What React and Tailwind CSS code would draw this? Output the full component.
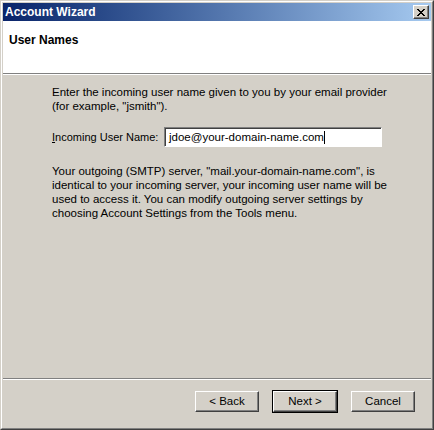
import React from "react";

function WinButton({ children, isDefault }) {
  return (
    <div className={isDefault ? "border border-black" : "border border-transparent"}>
      <button className="w-[64px] h-[21px] bg-[#d4d0c8] text-[11.5px] text-black border-t border-l border-white border-r border-b border-r-[#404040] border-b-[#404040] shadow-[inset_-1px_-1px_0_#808080] flex items-center justify-center">
        {children}
      </button>
    </div>
  );
}

export default function App() {
  return (
    <div
      className="w-[434px] h-[430px] bg-[#d4d0c8] text-black overflow-hidden"
      style={{ fontFamily: "'Liberation Sans', Arial, sans-serif" }}
    >
      <div className="w-full h-full border-t border-l border-[#d4d0c8] border-r border-b border-r-[#404040] border-b-[#404040]">
        <div className="w-full h-full border-t border-l border-white border-r border-b border-r-[#808080] border-b-[#808080] p-px flex flex-col">
          {/* title bar */}
          <div className="h-[18px] shrink-0 bg-gradient-to-r from-[#0a246a] to-[#a6caf0] flex items-center justify-between pl-[2px] pr-[2px]">
            <span className="text-white font-bold text-[12px] leading-none">Account Wizard</span>
            <div className="w-[16px] h-[14px] bg-[#d4d0c8] border-t border-l border-white border-r border-b border-r-[#404040] border-b-[#404040] shadow-[inset_-1px_-1px_0_#808080] flex items-center justify-center">
              <svg width="8" height="7" viewBox="0 0 8 7">
                <path d="M0 0h2v1h1v1h2V1h1V0h2v1H7v1H6v1H5v1h1v1h1v1h1v1H6V6H5V5H3v1H2v1H0V6h1V5h1V4h1V3H2V2H1V1H0z" fill="#000" />
              </svg>
            </div>
          </div>

          {/* header */}
          <div className="h-[52px] shrink-0 bg-white pl-[6px] pt-[10px]">
            <div className="font-bold text-[12px]">User Names</div>
          </div>
          <div className="h-px bg-[#808080] shrink-0" />
          <div className="h-px bg-white shrink-0" />

          {/* body */}
          <div className="flex-1 pl-[49px] pr-[30px] pt-[10px] text-[11.5px] leading-[14px]">
            <p>
              Enter the incoming user name given to you by your email provider
              <br />
              (for example, "jsmith").
            </p>
            <div className="flex items-center mt-[14px]">
              <span className="w-[112px] shrink-0 whitespace-nowrap text-[11px]">
                <span className="underline">I</span>ncoming User Name:
              </span>
              <div className="w-[218px] h-[20px] shrink-0 bg-white border-t border-l border-[#808080] border-r border-b border-r-white border-b-white shadow-[inset_1px_1px_0_#404040] flex items-center pl-[4px]">
                <span>jdoe@your-domain-name.com</span>
                <span className="w-px h-[13px] bg-black" />
              </div>
            </div>
            <p className="mt-[17px]">
              Your outgoing (SMTP) server, "mail.your-domain-name.com", is
              <br />
              identical to your incoming server, your incoming user name will be
              <br />
              used to access it. You can modify outgoing server settings by
              <br />
              choosing Account Settings from the Tools menu.
            </p>
          </div>

          <div className="h-px bg-[#808080] shrink-0" />
          <div className="h-px bg-white shrink-0" />

          {/* buttons */}
          <div className="h-[47px] shrink-0 flex justify-end items-start pt-[10px] pr-[15px] gap-[12px]">
            <WinButton>&lt; Back</WinButton>
            <WinButton isDefault>Next &gt;</WinButton>
            <WinButton>Cancel</WinButton>
          </div>
        </div>
      </div>
    </div>
  );
}
